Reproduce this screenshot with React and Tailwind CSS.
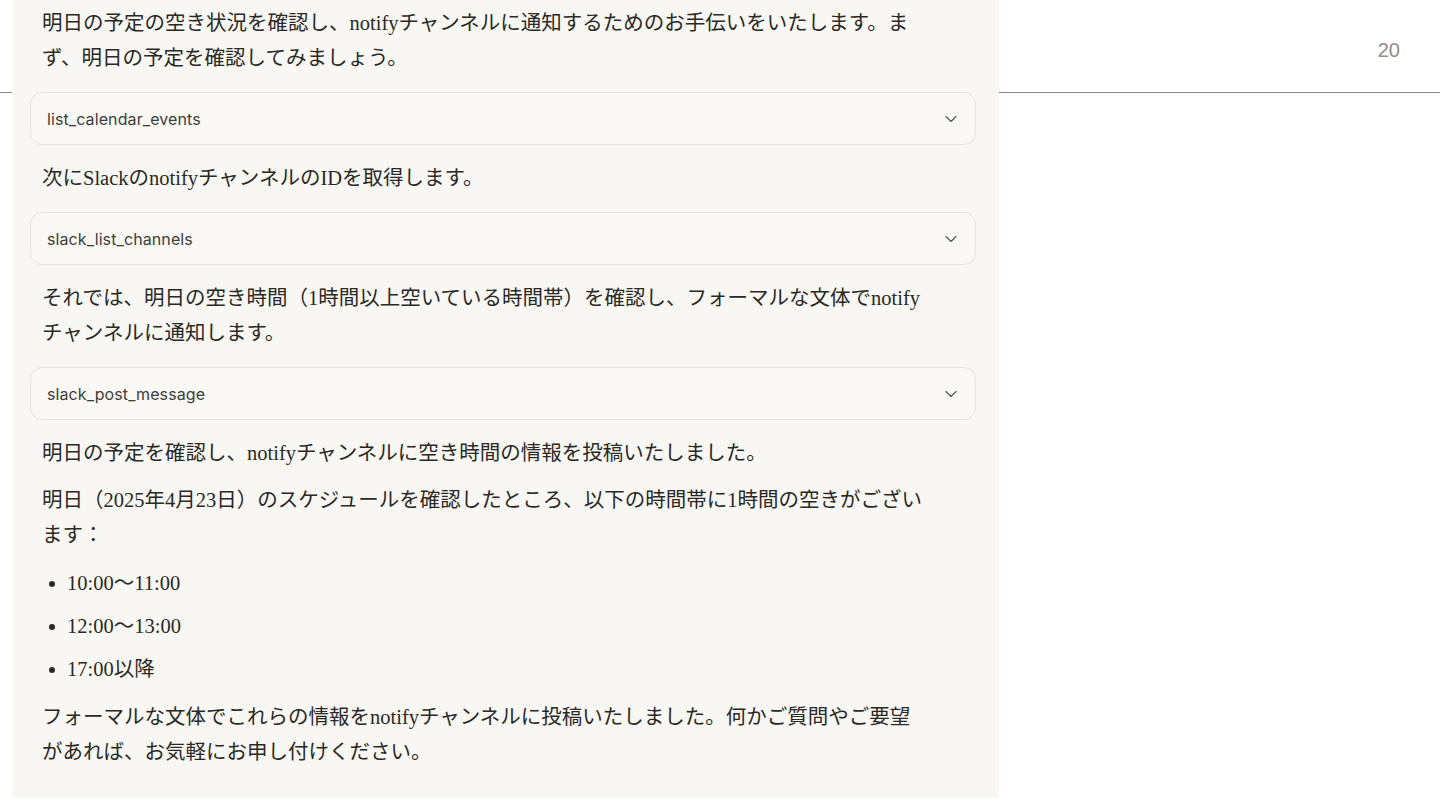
import { ChevronDown } from "lucide-react";

const ToolCall = ({ name, className = "" }) => (
  <div
    className={`flex h-[53px] items-center justify-between rounded-[12px] border border-[#e6e4de] bg-[#f9f8f5] pl-[16px] pr-[14px] ${className}`}
  >
    <span className="pt-[1px] font-['Inter',sans-serif] text-[16px] tracking-[0.1px] text-[#3d3d3a]">{name}</span>
    <ChevronDown size={20} strokeWidth={1.4} className="text-[#555550]" />
  </div>
);

// each entry is one visual line, so the wrap points match the screenshot
const Para = ({ lines, className = "" }) => (
  <div className={`pl-[12px] ${className}`}>
    {lines.map((l) => (
      <div key={l} className="whitespace-nowrap">
        {l}
      </div>
    ))}
  </div>
);

const slots = ["10:00〜11:00", "12:00〜13:00", "17:00以降"];

export default function App() {
  return (
    <div className="relative h-[810px] w-[1440px] overflow-hidden bg-white">
      {/* slide header: page number + rule */}
      <div className="flex h-[93px] items-center justify-end border-b-[1.5px] border-[#8a8a8a] pr-[40px] pt-[7px]">
        <span className="font-['Liberation_Sans',sans-serif] text-[20px] font-light text-[#8c8c8c]">20</span>
      </div>

      {/* pasted chat screenshot */}
      <div className="absolute left-[12px] top-0 h-[798px] w-[987px] bg-[#f8f7f4] pl-[18px] pr-[23px] pt-[6px] font-['Liberation_Serif','Noto_Sans_CJK_JP',serif] text-[20.5px] leading-[35px] text-[#2a2925]">
        <Para
          lines={[
            "明日の予定の空き状況を確認し、notifyチャンネルに通知するためのお手伝いをいたします。ま",
            "ず、明日の予定を確認してみましょう。",
          ]}
        />
        <ToolCall name="list_calendar_events" className="mt-[16px]" />
        <Para className="mt-[16px]" lines={["次にSlackのnotifyチャンネルのIDを取得します。"]} />
        <ToolCall name="slack_list_channels" className="mt-[16px]" />
        <Para
          className="mt-[16px]"
          lines={[
            "それでは、明日の空き時間（1時間以上空いている時間帯）を確認し、フォーマルな文体でnotify",
            "チャンネルに通知します。",
          ]}
        />
        <ToolCall name="slack_post_message" className="mt-[16px]" />
        <Para
          className="mt-[16px]"
          lines={["明日の予定を確認し、notifyチャンネルに空き時間の情報を投稿いたしました。"]}
        />
        <Para
          className="mt-[12px]"
          lines={[
            "明日（2025年4月23日）のスケジュールを確認したところ、以下の時間帯に1時間の空きがござい",
            "ます：",
          ]}
        />
        <ul className="mt-[13px] flex flex-col gap-[8px] pl-[12px]">
          {slots.map((s) => (
            <li key={s} className="flex items-center">
              <span className="ml-[7px] mr-[12px] h-[6px] w-[6px] rounded-full bg-[#2a2925]" />
              {s}
            </li>
          ))}
        </ul>
        <Para
          className="mt-[13px]"
          lines={[
            "フォーマルな文体でこれらの情報をnotifyチャンネルに投稿いたしました。何かご質問やご要望",
            "があれば、お気軽にお申し付けください。",
          ]}
        />
      </div>
    </div>
  );
}
